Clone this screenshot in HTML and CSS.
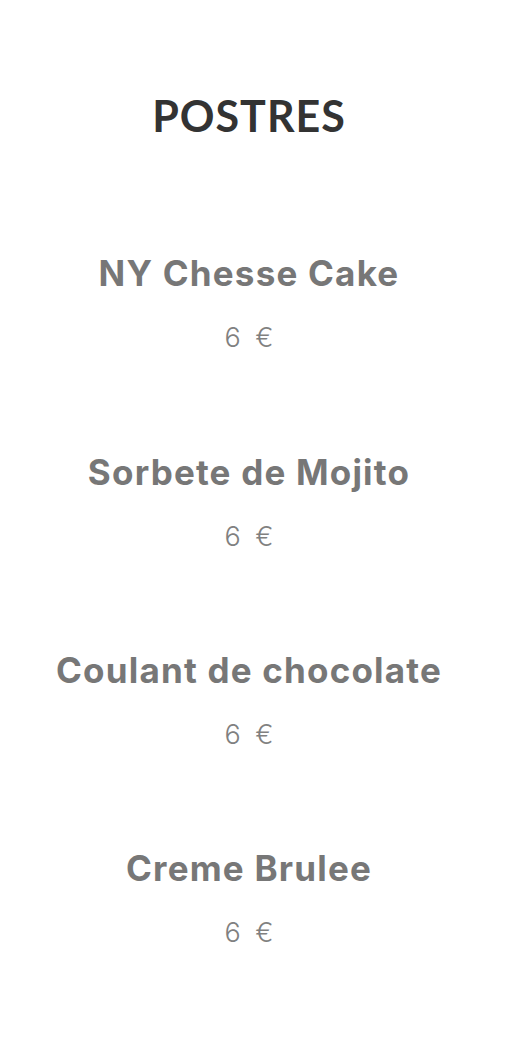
FILE: index.html
```html
<!DOCTYPE html>
<html lang="es">
<head>
  <meta charset="UTF-8">
  <meta name="viewport" content="width=device-width, initial-scale=1.0">
  <title>Postres</title>
  <link rel="stylesheet" href="styles.css">
</head>
<body>
  <div class="menu">
    <h1 class="menu-title">POSTRES</h1>
    <div class="item">
      <h2 class="item-name">NY Chesse Cake</h2>
      <p class="item-price">6 €</p>
    </div>
    <div class="item">
      <h2 class="item-name">Sorbete de Mojito</h2>
      <p class="item-price">6 €</p>
    </div>
    <div class="item">
      <h2 class="item-name">Coulant de chocolate</h2>
      <p class="item-price">6 €</p>
    </div>
    <div class="item">
      <h2 class="item-name">Creme Brulee</h2>
      <p class="item-price">6 €</p>
    </div>
  </div>
</body>
</html>
```

FILE: styles.css
```css
body {
  margin: 0;
  background: #ffffff;
  font-family: "Inter", "Liberation Sans", sans-serif;
}
.menu {
  width: 498px;
  padding-top: 88px;
  text-align: center;
  display: flex;
  flex-direction: column;
  gap: 95.3px;
}
.menu-title {
  margin: 0 0 12px;
  font-family: "Lato", "Liberation Sans", sans-serif;
  font-size: 43px;
  line-height: 56px;
  font-weight: 700;
  color: #333333;
  letter-spacing: 1px;
}
.item {
  display: flex;
  flex-direction: column;
  gap: 27px;
}
.item-name {
  margin: 0;
  font-size: 35px;
  line-height: 44px;
  font-weight: 700;
  color: #777777;
  letter-spacing: 1.2px;
}
.item-price {
  margin: 0;
  font-size: 27px;
  line-height: 32px;
  font-weight: 300;
  color: #808080;
  word-spacing: 7px;
}
```
